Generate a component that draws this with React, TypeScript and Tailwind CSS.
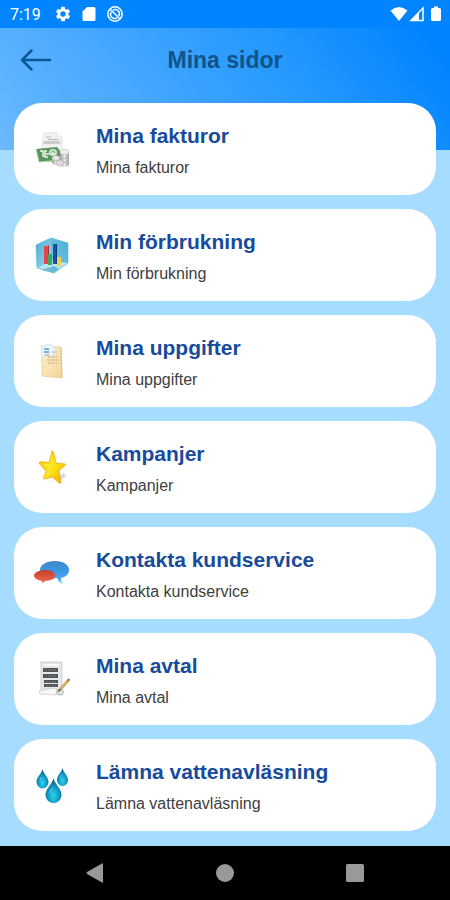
import type { ReactNode } from "react";

function InvoiceIcon() {
  return (
    <svg viewBox="0 0 60 60" className="size-15" aria-hidden="true">
      <defs>
        <linearGradient id="coin" x1="0" x2="1">
          <stop offset="0" stopColor="#9a9a9a" />
          <stop offset=".5" stopColor="#ececec" />
          <stop offset="1" stopColor="#9b9b9b" />
        </linearGradient>
      </defs>
      <path d="M24 13 37 12.500 42 17V30H22V24z" fill="#f1f1f1" stroke="#dedede" strokeWidth=".7" />
      <path d="M24 21H40V24H23z" fill="#ccc" />
      <path d="M26 17h5M28 19.500h10" stroke="#b5b5b5" strokeWidth="1" />
      <path d="M37 13v4h5" fill="#fff" stroke="#ddd" strokeWidth=".7" />
      <path d="M16 29 37 27 40 31V41L19 42z" fill="#57965a" />
      <path d="M16 29 19 42 40 40" fill="none" stroke="#b9d6b6" strokeWidth="1" />
      <ellipse cx="33" cy="32.500" rx="4" ry="3.500" fill="#dcead8" />
      <path d="M31 33c1-3 3-3 4 0" fill="none" stroke="#6b9b6c" strokeWidth="1" />
      <path d="M20 31h3v6M27 31h-2v6h3M26 34h3" fill="none" stroke="#eef6e9" strokeWidth="1.500" />
      <path d="M40 32v12c0 4 9 4 9 0V32z" fill="url(#coin)" />
      <ellipse cx="44.500" cy="32" rx="4.500" ry="2.500" fill="#eee" stroke="#bbb" strokeWidth=".6" />
      <path d="M40 36c1 3 8 3 9 0M40 40c1 3 8 3 9 0" fill="none" stroke="#b4b4b4" strokeWidth="1" />
      <path d="M32 38v4c0 4 8 4 8 0v-4z" fill="url(#coin)" />
      <ellipse cx="36" cy="38" rx="4" ry="2.500" fill="#e7e7e7" stroke="#aaa" strokeWidth=".6" />
      <ellipse cx="40" cy="43" rx="4" ry="3" fill="#ddd" stroke="#aaa" strokeWidth=".6" />
    </svg>
  );
}

function ChartIcon() {
  return (
    <svg viewBox="0 0 60 60" className="size-15" aria-hidden="true">
      <defs>
        <linearGradient id="cubeLeft" x1="0" y1="0" x2="1" y2="1">
          <stop offset="0" stopColor="#4aa9cf" />
          <stop offset="1" stopColor="#a1dcf0" />
        </linearGradient>
        <linearGradient id="cubeRight" x1="0" y1="1" x2="1" y2="0">
          <stop offset="0" stopColor="#71c5e3" />
          <stop offset="1" stopColor="#4daed5" />
        </linearGradient>
      </defs>
      <path d="M16 19 31 12 48 17V37L34 47 17 42z" fill="#82cce8" />
      <path d="M16 19 31 12V36L17 42z" fill="url(#cubeLeft)" />
      <path d="M31 12 48 17V37L31 36z" fill="url(#cubeRight)" />
      <path d="M17 42 31 35 48 37 34 47z" fill="#b6e5ef" />
      <path d="M22 44 34 40 39 43 34 47z" fill="#65b9d2" />
      <path d="M24 20h4v18h-4z" fill="#e44749" />
      <path d="M28 19v18h1V20z" fill="#a52d4c" />
      <path d="M28 28h4v11h-4z" fill="#36a969" />
      <path d="M33 18h4v20h-4z" fill="#17569f" />
      <path d="M36 18v20h1V18z" fill="#0a397e" />
      <path d="M37 31h4v9h-4z" fill="#f5cf50" />
      <path d="M16 19 31 12 48 17V37L34 47 17 42z" fill="none" stroke="#69bcd9" strokeWidth=".7" />
    </svg>
  );
}

function DetailsIcon() {
  return (
    <svg viewBox="0 0 60 60" className="size-15" aria-hidden="true">
      <defs>
        <linearGradient id="folder" x1="0" y1="0" x2="1" y2="1">
          <stop offset="0" stopColor="#fff0cc" />
          <stop offset="1" stopColor="#f3d596" />
        </linearGradient>
      </defs>
      <path d="M22 14 41 15 42 46 22 44z" fill="url(#folder)" stroke="#e5ca91" strokeWidth=".7" />
      <path d="M21 14 31 12 36 18 34 24 22 25z" fill="#e7f5fb" stroke="#cfe0e8" strokeWidth=".8" />
      <path d="M24 17h5M24 20h5" stroke="#5b96c8" strokeWidth="1.500" />
      <path d="M25 23h4" stroke="#d9766c" strokeWidth="1" />
      <path d="M32 20h5M28 25h9M27 28h11M28 31h9" stroke="#c3ae86" strokeWidth="1.200" strokeDasharray="3 1" />
      <path d="M41 15 42 46" stroke="#e4c07e" strokeWidth="1" />
    </svg>
  );
}

function StarIcon() {
  return (
    <svg viewBox="0 0 60 60" className="size-15" aria-hidden="true">
      <defs>
        <linearGradient id="star" x1="0" y1="0" x2="1" y2="1">
          <stop offset="0" stopColor="#ffc400" />
          <stop offset=".5" stopColor="#ffe519" />
          <stop offset="1" stopColor="#f1a900" />
        </linearGradient>
      </defs>
      <path d="M36 40 44 35 46 38 41 42z" fill="#d6d7df" />
      <path d="M32 13c2-1 3 8 4 12l9 1c2 1-4 4-6 7l2 12c-1 2-7-5-9-6l-8 2c-2 0 2-6 2-8l-7-8c0-2 8-1 10 0z" fill="url(#star)" stroke="#e9a31a" strokeWidth=".8" />
      <path d="m31 19 1 8-8-1 6 4-2 7 7-4" fill="none" stroke="#fff35b" strokeWidth="1" opacity=".7" />
    </svg>
  );
}

function ContactIcon() {
  return (
    <svg viewBox="0 0 60 60" className="size-15" aria-hidden="true">
      <defs>
        <linearGradient id="blueBubble" x1="0" y1="1" x2="0" y2="0">
          <stop offset="0" stopColor="#6cbcfb" />
          <stop offset=".5" stopColor="#3b98ea" />
          <stop offset="1" stopColor="#3f8ac6" />
        </linearGradient>
        <linearGradient id="redBubble" x1="0" y1="1" x2="0" y2="0">
          <stop offset="0" stopColor="#f16a4b" />
          <stop offset="1" stopColor="#c4402f" />
        </linearGradient>
      </defs>
      <path d="M35 17c9 0 14 4 14 9 0 4-3 7-8 8 0 3 0 4 2 6-3-1-5-3-6-6-10 1-17-2-17-8 0-5 6-9 15-9z" fill="url(#blueBubble)" />
      <path d="M25 26c6 0 10 2 10 5.500s-4 5-10 5.500c-1 1-3 2-4 2 1-1 1-1 1-2-5-1-8-3-8-5.500 0-3 5-5.500 11-5.500z" fill="url(#redBubble)" />
    </svg>
  );
}

function ContractIcon() {
  return (
    <svg viewBox="0 0 60 60" className="size-15" aria-hidden="true">
      <path d="M21 12H42V42H21z" fill="#e5e7e8" stroke="#bec2c4" strokeWidth=".7" />
      <path d="M24 14h15v2H24z" fill="#fafafa" />
      <path d="M23 18h15v4H23zM23 24h15v4H23zM24 30h14v3H24zM24 34h14v3H24z" fill="#4e5457" />
      <path d="M25 20h12M25 26h12M26 32h10M26 36h10" stroke="#929698" strokeWidth=".7" strokeDasharray="2 1" />
      <path d="M19 41 33 38 41 41 37 45 20 44z" fill="#f7f7f7" stroke="#cfcfcf" strokeWidth=".8" />
      <ellipse cx="40" cy="42" rx="3.500" ry="3" fill="#dde1e1" stroke="#a5a9a9" strokeWidth=".8" />
      <path d="m38 42 3-5 7-8 1 2-7 8z" fill="#e7b75d" stroke="#9b783e" strokeWidth=".6" />
      <path d="m38 42 1-3 2 1z" fill="#484f54" />
      <path d="m47 30 2-2 1 2-2 2z" fill="#bf6650" />
    </svg>
  );
}

function WaterIcon() {
  return (
    <svg viewBox="0 0 60 60" className="size-15" aria-hidden="true">
      <defs>
        <radialGradient id="drop" cx=".5" cy=".7" r=".65">
          <stop offset="0" stopColor="#2ed5ed" />
          <stop offset=".5" stopColor="#139ec7" />
          <stop offset="1" stopColor="#105588" />
        </radialGradient>
      </defs>
      <path d="M22.500 13c1 5 6 8 6 13a6 6.500 0 0 1-12 0c0-5 5-8 6-13z" fill="url(#drop)" />
      <path d="M42.500 12c1 5 5.500 7 5.500 12a5.500 6 0 0 1-11 0c0-5 4.500-7 5.500-12z" fill="url(#drop)" />
      <path d="M33.500 22c1 6 8 10 8 17a8 8 0 0 1-16 0c0-7 7-11 8-17z" fill="url(#drop)" />
      <path d="M20 24q0-2 2-3M40 22q0-2 2-3M30 37q0-3 3-5" fill="none" stroke="#8bdff0" strokeWidth="1" opacity=".6" />
    </svg>
  );
}

const items: { label: string; icon: ReactNode }[] = [
  { label: "Mina fakturor", icon: <InvoiceIcon /> },
  { label: "Min förbrukning", icon: <ChartIcon /> },
  { label: "Mina uppgifter", icon: <DetailsIcon /> },
  { label: "Kampanjer", icon: <StarIcon /> },
  { label: "Kontakta kundservice", icon: <ContactIcon /> },
  { label: "Mina avtal", icon: <ContractIcon /> },
  { label: "Lämna vattenavläsning", icon: <WaterIcon /> },
];

function StatusBar() {
  return (
    <div className="flex h-7 items-center bg-[#0084ff] pr-2 pl-2.5 text-white">
      <time className="w-11 pt-0.5 font-['Roboto',sans-serif] text-base leading-7">7:19</time>
      <div className="flex items-center gap-2">
        <svg viewBox="0 0 24 24" className="size-4.5" fill="currentColor" role="img" aria-label="Inställningar">
          <path d="M19.140 12.940c.04-.3.06-.61.06-.94s-.02-.64-.07-.94l2.030-1.580a.49.49 0 0 0 .12-.61l-1.920-3.320a.49.49 0 0 0-.59-.22l-2.390.96a7 7 0 0 0-1.620-.94l-.36-2.540a.48.48 0 0 0-.48-.41h-3.840a.48.48 0 0 0-.47.41l-.36 2.540a7 7 0 0 0-1.620.94l-2.390-.96a.49.49 0 0 0-.59.22L2.740 8.870a.48.48 0 0 0 .12.61l2.030 1.580a6 6 0 0 0 0 1.880l-2.030 1.580a.49.49 0 0 0-.12.61l1.920 3.320c.12.22.37.29.59.22l2.390-.96c.5.38 1.030.7 1.620.94l.36 2.540c.05.24.24.41.48.41h3.840c.24 0 .44-.17.47-.41l.36-2.540a7 7 0 0 0 1.620-.94l2.390.96c.22.08.47 0 .59-.22l1.920-3.320a.48.48 0 0 0-.12-.61zM12 15.600a3.600 3.600 0 1 1 0-7.200 3.600 3.600 0 0 1 0 7.200z" />
        </svg>
        <svg viewBox="0 0 18 18" className="size-4.5" fill="currentColor" role="img" aria-label="Minneskort">
          <path d="M7 2h7q1.500 0 1.500 1.500v11q0 1.500-1.500 1.500H4q-1.500 0-1.500-1.500V6.500z" />
        </svg>
        <svg viewBox="0 0 18 18" className="size-4.5" fill="none" stroke="currentColor" role="img" aria-label="Synkronisering">
          <circle cx="9" cy="9" r="7.200" strokeWidth="1.500" />
          <path d="M7 5.200A4.200 4.200 0 0 1 12.800 11M5.200 7A4.200 4.200 0 0 0 11 12.800M4.500 4.500l9 9" strokeWidth="1.500" />
        </svg>
      </div>
      <div className="ml-auto flex items-center">
        <svg viewBox="0 0 18 16" className="h-4 w-[18px]" fill="currentColor" role="img" aria-label="Wi-Fi">
          <path d="M.5 4.500Q9-2.500 17.500 4.500L9 15z" />
        </svg>
        <svg viewBox="0 0 18 16" className="h-4 w-[18px]" role="img" aria-label="Mobilnät">
          <path d="M3 14.500 15 2v12.500z" fill="none" stroke="currentColor" strokeWidth="1.500" />
          <path d="M3 14.500 11 6v8.500z" fill="currentColor" />
        </svg>
        <svg viewBox="0 0 12 16" className="ml-1 h-4 w-3" fill="currentColor" role="img" aria-label="Batteri">
          <path d="M4 .5h4V2h1.500Q11 2 11 3.500v10q0 1.500-1.500 1.500h-7Q1 15 1 13.500v-10Q1 2 2.500 2H4z" />
        </svg>
      </div>
    </div>
  );
}

export default function App() {
  return (
    <div className="flex min-h-screen flex-col bg-[#a5dcff] font-['Liberation_Sans',Arial,sans-serif]">
      <StatusBar />
      <div className="flex-1 bg-[linear-gradient(52deg,#6bb9ff_0%,#3ea4ff_40%,#2498ff_65%,#0084ff_95%)] bg-[length:100%_122px] bg-no-repeat">
        <header className="grid h-16 grid-cols-[70px_1fr_70px] items-center">
          <button type="button" aria-label="Tillbaka" className="flex h-full items-center pl-5 text-[#075795]">
            <svg viewBox="0 0 32 24" className="h-6 w-8" fill="none" stroke="currentColor" strokeWidth="2.500" strokeLinecap="round" strokeLinejoin="round" aria-hidden="true">
              <path d="M30 12H2M11.500 2.500 2 12l9.500 9.500" />
            </svg>
          </button>
          <h1 className="text-center text-[23px] leading-8 font-bold text-[#125289]">Mina sidor</h1>
        </header>
        <main className="px-3.5 pt-[11px] pb-3.5">
          <ul className="flex flex-col gap-3.5">
            {items.map(({ label, icon }) => (
              <li key={label}>
                <button type="button" className="flex h-[92px] w-full items-center rounded-[28px] bg-white pt-0.5 pl-1.5 text-left">
                  {icon}
                  <span className="ml-4 flex flex-col gap-1">
                    <span className="text-[21px] leading-8 font-bold text-[#174b9c]">{label}</span>
                    <span className="text-base leading-6 text-[#404040]">{label}</span>
                  </span>
                </button>
              </li>
            ))}
          </ul>
        </main>
      </div>
      <nav aria-label="Systemnavigering" className="grid h-[54px] grid-cols-3 items-center bg-black px-[30px] text-[#999999]">
        <button type="button" aria-label="Bakåt" className="flex justify-center">
          <svg viewBox="0 0 20 20" className="size-5" fill="currentColor" aria-hidden="true"><path d="M18 1v18q0 1-1 .5L2 11q-1-1 0-2L17 .5q1-.5 1 .5z" /></svg>
        </button>
        <button type="button" aria-label="Hem" className="flex justify-center">
          <svg viewBox="0 0 20 20" className="size-5" fill="currentColor" aria-hidden="true"><circle cx="10" cy="10" r="9" /></svg>
        </button>
        <button type="button" aria-label="Senaste appar" className="flex justify-center">
          <svg viewBox="0 0 20 20" className="size-5" fill="currentColor" aria-hidden="true"><rect x="1" y="1" width="18" height="18" rx="1.500" /></svg>
        </button>
      </nav>
    </div>
  );
}
